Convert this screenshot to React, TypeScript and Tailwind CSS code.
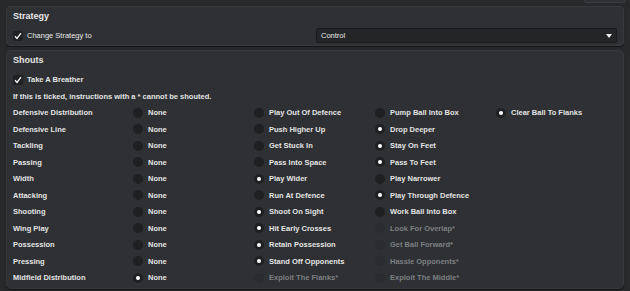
import React from "react";

type Opt = { text: string; on?: boolean; off?: boolean };
type Row = { label: string; opts: Opt[] };

const rows: Row[] = [
  { label: "Defensive Distribution", opts: [{ text: "None" }, { text: "Play Out Of Defence" }, { text: "Pump Ball Into Box" }, { text: "Clear Ball To Flanks", on: true }] },
  { label: "Defensive Line", opts: [{ text: "None" }, { text: "Push Higher Up" }, { text: "Drop Deeper", on: true }] },
  { label: "Tackling", opts: [{ text: "None" }, { text: "Get Stuck In" }, { text: "Stay On Feet", on: true }] },
  { label: "Passing", opts: [{ text: "None" }, { text: "Pass Into Space" }, { text: "Pass To Feet", on: true }] },
  { label: "Width", opts: [{ text: "None" }, { text: "Play Wider", on: true }, { text: "Play Narrower" }] },
  { label: "Attacking", opts: [{ text: "None" }, { text: "Run At Defence" }, { text: "Play Through Defence", on: true }] },
  { label: "Shooting", opts: [{ text: "None" }, { text: "Shoot On Sight", on: true }, { text: "Work Ball Into Box" }] },
  { label: "Wing Play", opts: [{ text: "None" }, { text: "Hit Early Crosses", on: true }, { text: "Look For Overlap*", off: true }] },
  { label: "Possession", opts: [{ text: "None" }, { text: "Retain Possession", on: true }, { text: "Get Ball Forward*", off: true }] },
  { label: "Pressing", opts: [{ text: "None" }, { text: "Stand Off Opponents", on: true }, { text: "Hassle Opponents*", off: true }] },
  { label: "Midfield Distribution", opts: [{ text: "None", on: true }, { text: "Exploit The Flanks*", off: true }, { text: "Exploit The Middle*", off: true }] },
];

function Check() {
  return (
    <div className="w-[10px] h-[10px] rounded-[2px] bg-[#1e2022] flex items-center justify-center">
      <svg width="8" height="8" viewBox="0 0 8 8">
        <path d="M1 4.3 L3 6.5 L7 1.2" stroke="#f2f2f2" strokeWidth="1.4" fill="none" />
      </svg>
    </div>
  );
}

function Radio({ opt }: { opt: Opt }) {
  return (
    <div className="flex items-center gap-[5px]">
      <div
        className={
          "w-[10px] h-[10px] rounded-full flex items-center justify-center " +
          (opt.off ? "bg-[#2a2c2f]" : "bg-[#1e2022]")
        }
      >
        {opt.on && <div className="w-[4px] h-[4px] rounded-full bg-white" />}
      </div>
      <span className={opt.off ? "text-[#7d7f82]" : "text-[#e4e4e4]"}>{opt.text}</span>
    </div>
  );
}

export default function App() {
  return (
    <div
      className="w-[630px] h-[291px] overflow-hidden bg-[#27292b] flex flex-col gap-[4px] px-[6px] font-bold text-[7.5px] leading-none text-[#e4e4e4]"
      style={{ fontFamily: '"Liberation Sans", Arial, sans-serif' }}
    >
      <div className="h-[2px] flex justify-end">
        <div className="w-[42px] h-[3px] mr-[-2px] rounded-b-[3px] bg-[#2e3033] border border-t-0 border-[#3a3c3f]" />
      </div>

      {/* Strategy */}
      <div className="h-[40px] rounded-[4px] bg-[#2e3033] border border-[#37393c] shadow-[0_1px_1px_rgba(0,0,0,0.5)] px-[6px] pt-[5px]">
        <p className="text-[9px] text-[#e6e6e6]">Strategy</p>
        <div className="flex items-center mt-[7px]">
          <div className="w-[303px] flex items-center gap-[4px]">
            <Check />
            <span className="font-normal text-[#e8e8e8]">Change Strategy to</span>
          </div>
          <div className="w-[301px] h-[15px] rounded-[2px] bg-[#232527] border border-[#1a1b1d] flex items-center justify-between pl-[4px] pr-[4px]">
            <span className="font-normal text-[#e8e8e8]">Control</span>
            <svg width="6" height="4" viewBox="0 0 6 4">
              <path d="M0 0 H6 L3 4 Z" fill="#f0f0f0" />
            </svg>
          </div>
        </div>
      </div>

      {/* Shouts */}
      <div className="h-[239px] rounded-[5px] bg-[#2e3033] border border-[#37393c] shadow-[0_1px_1px_rgba(0,0,0,0.5)] px-[6px] pt-[5px]">
        <p className="text-[9px] text-[#e6e6e6]">Shouts</p>
        <div className="flex items-center gap-[4px] mt-[10px]">
          <Check />
          <span>Take A Breather</span>
        </div>
        <p className="mt-[8px]">If this is ticked, instructions with a * cannot be shouted.</p>
        <div className="mt-[4px] flex flex-col">
          {rows.map((r) => (
            <div key={r.label} className="h-[16.5px] grid grid-cols-[120px_121px_121px_121px_1fr] items-center">
              <span>{r.label}</span>
              {r.opts.map((o) => (
                <Radio key={o.text} opt={o} />
              ))}
            </div>
          ))}
        </div>
      </div>
    </div>
  );
}
